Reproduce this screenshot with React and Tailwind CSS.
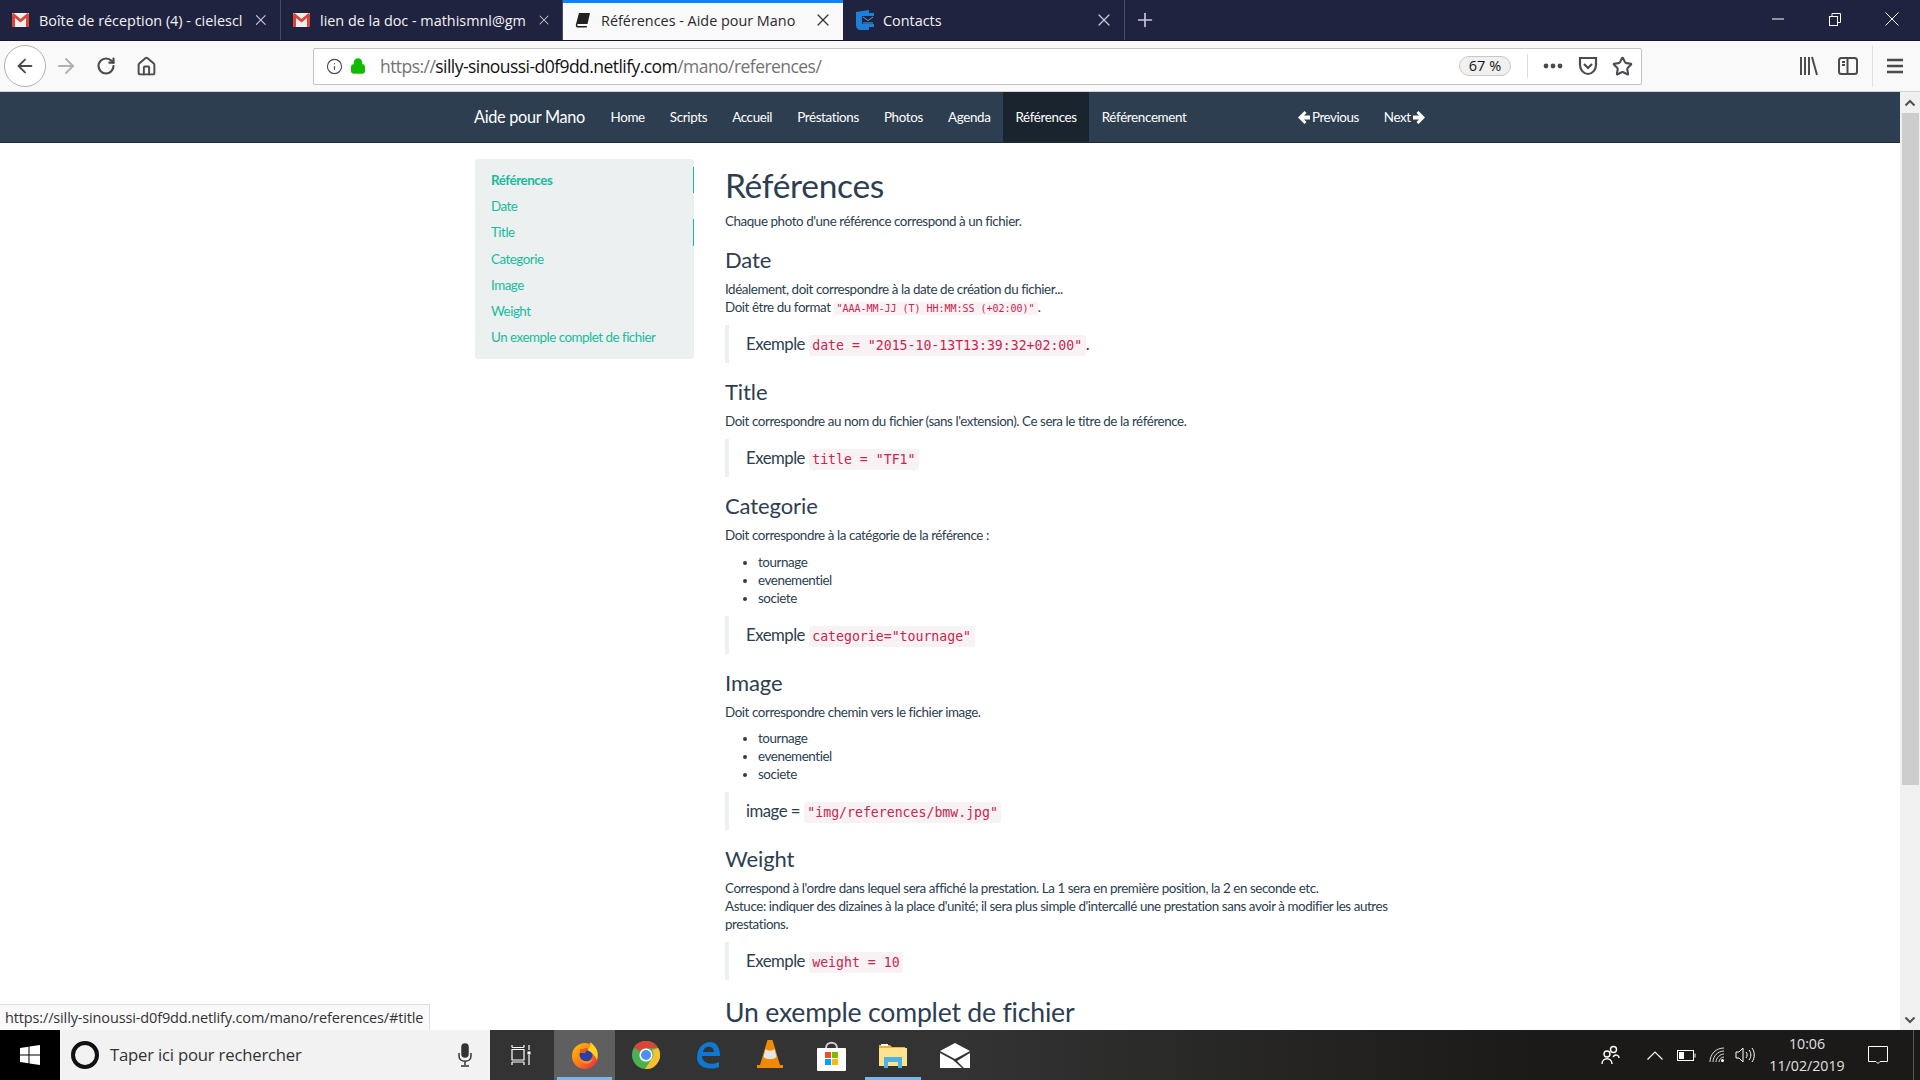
import React from 'react';
import { X, Plus, ArrowLeft, ArrowRight, RotateCw, Home as HomeIcon, Info, Lock, Star } from 'lucide-react';

const GmailIcon = () => (
  <svg width="17" height="14" viewBox="0 0 17 14" className="shrink-0">
    <rect width="17" height="14" rx="1" fill="#eeeeee" />
    <path d="M0 1.5 L0 14 L3 14 L3 5 L8.5 9.5 L14 5 L14 14 L17 14 L17 1.5 L15.5 0 L8.5 6 L1.5 0 Z" fill="#d9453a" />
  </svg>
);

const BookIcon = () => (
  <svg width="16" height="16" viewBox="0 0 16 16" className="shrink-0">
    <path d="M4 1 L15 1 L12.5 12 L3 12 C2 12 2 14 3 14 L12 14 L11.7 15.5 L2.5 15.5 C0.8 15.5 0.6 13.5 1 12 Z" fill="#222222" />
  </svg>
);

const ContactsIcon = () => (
  <svg width="20" height="20" viewBox="0 0 20 20" className="-mr-[2px] shrink-0">
    <path d="M1 2 L14 0 L14 3 L19 3 L19 17 L14 17 L14 20 L6 20 C3 20 1 18 1 15 Z" fill="#1e7fd6" />
    <rect x="7" y="6" width="12" height="8" fill="#20233f" />
    <path d="M8 7 L13 10.5 L18 7 M8 13 L18 13" stroke="#4aa3ea" strokeWidth="1" fill="none" />
  </svg>
);

const Tab = ({ icon, title, active, width }) => (
  <div className={`relative flex h-full items-center gap-[10px] pl-[12px] pr-[12px] ${width} ${active ? 'bg-[#f9f9fa] text-[#2a2a2e]' : 'border-r border-[#4a4c66] text-[#f2f2f5]'}`}>
    {active && <div className="absolute left-0 right-0 top-0 h-[3px] bg-[#0a84ff]" />}
    {icon}
    <span className="flex-1 whitespace-nowrap pt-[2px] text-[14.4px] leading-none">{title}</span>
    <X size={20} strokeWidth={1.5} className={`-mr-[2px] ${active ? 'text-[#333]' : 'text-[#c9cad3]'}`} />
  </div>
);

const TabBar = () => (
  <div className="flex h-[41px] items-stretch border-b border-[#15162b] bg-[#202340]" >
    <Tab width="w-[281px]" icon={<GmailIcon />} title="Boîte de réception (4) - cielescl" />
    <Tab width="w-[282px]" icon={<GmailIcon />} title="lien de la doc - mathismnl@gm" />
    <Tab width="w-[280px]" active icon={<BookIcon />} title="Références - Aide pour Mano" />
    <Tab width="w-[282px]" icon={<ContactsIcon />} title="Contacts" />
    <div className="flex w-[40px] items-center justify-center text-[#c9cad3]">
      <Plus size={22} strokeWidth={1.8} />
    </div>
    <div className="ml-auto flex items-center pb-[2px]">
      <div className="flex w-[57px] justify-center">
        <svg width="12" height="2" viewBox="0 0 12 2" stroke="white" strokeWidth="1"><path d="M0 1 H12" /></svg>
      </div>
      <div className="flex w-[57px] justify-center">
        <svg width="12" height="13" viewBox="0 0 12 13" fill="none" stroke="white" strokeWidth="1">
          <rect x="0.5" y="3.5" width="8" height="9" />
          <path d="M3 3 V0.5 H11.5 V9.5 H9" />
        </svg>
      </div>
      <div className="flex w-[57px] justify-center">
        <svg width="14" height="14" viewBox="0 0 14 14" stroke="white" strokeWidth="1"><path d="M0.5 0.5 L13.5 13.5 M13.5 0.5 L0.5 13.5" /></svg>
      </div>
    </div>
  </div>
);

const Toolbar = () => (
  <div className="flex h-[51px] items-center border-b border-[#d4d4d5] bg-[#f9f9fa] text-[#4a4a4f]">
    <div className="ml-[4px] flex h-[42px] w-[42px] items-center justify-center rounded-full border border-[#b1b1b3] bg-white">
      <ArrowLeft size={22} strokeWidth={2} />
    </div>
    <ArrowRight size={24} strokeWidth={2} className="ml-[8px] text-[#b1b1b3]" />
    <RotateCw size={20} strokeWidth={2.6} className="ml-[18px]" />
    <HomeIcon size={21} strokeWidth={2.2} className="ml-[20px]" />
    <div className="ml-[156px] flex h-[37px] w-[1329px] items-center rounded-[2px] border border-[#c4c4c4] bg-white pl-[12px] pr-[8px]" >
      <Info size={17} strokeWidth={1.6} />
      <Lock size={16} strokeWidth={3} className="ml-[7px] text-[#12bc00]" fill="#12bc00" />
      <span className="ml-[14px] flex-1 whitespace-nowrap text-[17.5px] tracking-[-0.55px] text-[#737373]">
        https://<span className="text-[#111]">silly-sinoussi-d0f9dd.netlify.com</span>/mano/references/
      </span>
      <div className="flex h-[20px] w-[52px] items-center justify-center rounded-full border border-[#c8c8c8] bg-[#f0f0f1] text-[14.5px] text-[#111]">67 %</div>
      <div className="ml-[16px] h-[24px] w-px bg-[#dcdcdd]" />
      <svg width="20" height="6" viewBox="0 0 20 6" className="ml-[15px]" fill="#4a4a4f">
        <circle cx="3" cy="3" r="2.4" /><circle cx="10" cy="3" r="2.4" /><circle cx="17" cy="3" r="2.4" />
      </svg>
      <svg width="20" height="20" viewBox="0 0 20 20" className="ml-[15px]" fill="none" stroke="#4a4a4f" strokeWidth="2.2">
        <path d="M2 2 H18 V9 C18 14 14 18 10 18 C6 18 2 14 2 9 Z" />
        <path d="M6 8 L10 12 L14 8" />
      </svg>
      <Star size={21} strokeWidth={2.4} className="ml-[14px]" />
    </div>
    <svg width="20" height="20" viewBox="0 0 20 20" className="ml-[157px]" fill="none" stroke="#4a4a4f" strokeWidth="2">
      <path d="M2 1 V19 M6 1 V19 M10 1 V19 M13 1 L18 19" />
    </svg>
    <svg width="20" height="20" viewBox="0 0 20 20" className="ml-[19px]" fill="none" stroke="#4a4a4f" strokeWidth="2">
      <rect x="1" y="2" width="18" height="16" rx="2.5" />
      <path d="M9.5 2 V18 M4 6 H7 M4 9 H7" />
    </svg>
    <div className="ml-[14px] h-[42px] w-px bg-[#e1e1e2]" />
    <svg width="18" height="16" viewBox="0 0 18 16" className="ml-[13px]" stroke="#4a4a4f" strokeWidth="2.4">
      <path d="M1 2 H17 M1 8 H17 M1 14 H17" />
    </svg>
  </div>
);

// glyphicon style solid arrow, pointing right unless flipped
const SolidArrow = ({ flip }) => (
  <svg width="13" height="13" viewBox="0 0 13 13" fill="white" className={flip ? '-scale-x-100' : ''}>
    <path d="M0 4.5 H6 L3.5 2 L5.5 0 L12 6.5 L5.5 13 L3.5 11 L6 8.5 H0 Z" />
  </svg>
);

const NAV_LINKS = ['Home', 'Scripts', 'Accueil', 'Préstations', 'Photos', 'Agenda', 'Références', 'Référencement'];

const NavBar = () => (
  <nav className="flex h-[51px] shrink-0 items-stretch border-b border-[#1f2c39] bg-[#2c3e50] pl-[474px] pr-[462px] text-[13.4px] tracking-[-0.35px] text-white">
    <div className="mr-[13px] flex items-center text-[16.3px] tracking-[-0.3px]">Aide pour Mano</div>
    {NAV_LINKS.map(link => (
      <div key={link} className={`flex items-center px-[12.5px] ${link === 'Références' ? 'bg-[#1a242f]' : ''}`}>{link}</div>
    ))}
    <div className="ml-auto flex items-center gap-[2px] px-[12.5px] tracking-[-0.45px]">
      <SolidArrow flip />Previous
    </div>
    <div className="flex items-center gap-[2px] px-[12.5px] tracking-[-0.45px]">
      Next<SolidArrow />
    </div>
  </nav>
);

const SIDE_LINKS = ['Références', 'Date', 'Title', 'Categorie', 'Image', 'Weight', 'Un exemple complet de fichier'];

const Sidebar = () => (
  <aside className="mt-[16px] h-[200px] w-[219px] shrink-0 rounded-[3px] bg-[#ecf0f1] py-[8px] text-[13.4px] tracking-[-0.5px] text-[#18bc9c]">
    {SIDE_LINKS.map((link, i) => (
      <div key={link} className={`flex h-[26.2px] items-center border-r pl-[16px] ${i === 0 || i === 2 ? 'border-[#18bc9c]' : 'border-transparent'} ${i === 0 ? 'font-bold tracking-[-0.45px]' : ''}`}>
        {link}
      </div>
    ))}
  </aside>
);

const Code = ({ children, small }) => (
  <code className={`whitespace-pre rounded-[3px] bg-[#f9f2f4] leading-none text-[#c7254e] font-['DejaVu_Sans_Mono',monospace] ${small ? 'px-[3px] py-px text-[10px] tracking-[-0.02px]' : 'px-[3.5px] py-[3px] text-[13.2px] tracking-normal'}`}>
    {children}
  </code>
);

const Quote = ({ children }) => (
  <blockquote className="mb-[9px] flex h-[38px] items-center whitespace-pre border-l-[4px] border-[#ecf0f1] pl-[17px] text-[16.75px] tracking-[-0.5px]">
    <span>{children}</span>
  </blockquote>
);

const H2 = ({ children }) => <h2 className="mb-[8px] mt-[17px] text-[22px] leading-[24px] tracking-[-0.1px]">{children}</h2>;

const P = ({ children }) => <p className="mb-[9px]">{children}</p>;

const Bullets = ({ tight }) => (
  <ul className={`mb-[9px] list-disc pl-[33px] ${tight ? '-mt-px' : ''}`}>
    <li>tournage</li>
    <li>evenementiel</li>
    <li>societe</li>
  </ul>
);

const Article = () => (
  <main className="ml-[31px] w-[675px] shrink-0 pt-[24px] text-[13.4px] leading-[18px] tracking-[-0.43px] text-[#2c3e50]">
    <h1 className="mb-[9px] text-[33.5px] leading-[36px] tracking-[-0.3px]">Références</h1>
    <P>Chaque photo d'une référence correspond à un fichier.</P>
    <h2 className="mb-[8px] mt-[18px] text-[22px] leading-[24px] tracking-[-0.1px]">Date</h2>
    <P>
      Idéalement, doit correspondre à la date de création du fichier...<br />
      Doit être du format <Code small>"AAA-MM-JJ (T) HH:MM:SS (+02:00)"</Code>.
    </P>
    <Quote>Exemple <Code>date = "2015-10-13T13:39:32+02:00"</Code>.</Quote>
    <H2>Title</H2>
    <P>Doit correspondre au nom du fichier (sans l'extension). Ce sera le titre de la référence.</P>
    <Quote>Exemple <Code>title = "TF1"</Code></Quote>
    <H2>Categorie</H2>
    <P>Doit correspondre à la catégorie de la référence :</P>
    <Bullets />
    <Quote>Exemple <Code>categorie="tournage"</Code></Quote>
    <H2>Image</H2>
    <P>Doit correspondre chemin vers le fichier image.</P>
    <Bullets tight />
    <Quote>image = <Code>"img/references/bmw.jpg"</Code></Quote>
    <H2>Weight</H2>
    <P>
      Correspond à l'ordre dans lequel sera affiché la prestation. La 1 sera en première position, la 2 en seconde etc.<br />
      Astuce: indiquer des dizaines à la place d'unité; il sera plus simple d'intercallé une prestation sans avoir à modifier les autres prestations.
    </P>
    <Quote>Exemple <Code>weight = 10</Code></Quote>
    <h1 className="mt-[16px] text-[26.6px] leading-[32px] tracking-[-0.2px]">Un exemple complet de fichier</h1>
  </main>
);

const Scrollbar = () => (
  <div className="flex w-[20px] shrink-0 flex-col items-center bg-[#f0f0f0] text-[#505050]">
    <svg width="12" height="8" viewBox="0 0 12 8" className="mt-[7px]" fill="none" stroke="currentColor" strokeWidth="2"><path d="M1.5 6.5 L6 2 L10.5 6.5" /></svg>
    <div className="mt-[6px] h-[672px] w-[17px] bg-[#cdcdcd]" />
    <svg width="12" height="8" viewBox="0 0 12 8" className="mb-[6px] mt-auto" fill="none" stroke="currentColor" strokeWidth="2"><path d="M1.5 1.5 L6 6 L10.5 1.5" /></svg>
  </div>
);

const FirefoxIcon = () => (
  <svg width="28" height="28" viewBox="0 0 28 28">
    <defs>
      <linearGradient id="fx" x1="0" y1="0" x2="1" y2="1"><stop offset="0" stopColor="#ffcb00" /><stop offset="0.5" stopColor="#ff7a1a" /><stop offset="1" stopColor="#e3204d" /></linearGradient>
    </defs>
    <circle cx="14" cy="15" r="13" fill="url(#fx)" />
    <circle cx="15" cy="14" r="6.5" fill="#2b3fa8" />
    <path d="M19 1 C26 6 28 12 26 19 C24 15 21 11 16 9 C19 7 20 4 19 1 Z" fill="#ffd21f" />
    <path d="M7 15 C10 21 17 22 22 18 C20 24 11 25 7 15 Z" fill="#ff9a15" />
    <path d="M9 8 H17 L14 12 H9 Z" fill="#f25a1d" />
  </svg>
);

const ChromeIcon = () => (
  <svg width="28" height="28" viewBox="0 0 28 28">
    <circle cx="14" cy="14" r="14" fill="#4caf50" />
    <path d="M14 0 A14 14 0 0 1 26.1 7 L14 7 A7 7 0 0 0 7.9 10.5 L2 6 A14 14 0 0 1 14 0 Z" fill="#db4437" />
    <path d="M26.1 7 A14 14 0 0 1 13 28 L20 17.5 A7 7 0 0 0 20 9 Z" fill="#fbc02d" />
    <circle cx="14" cy="14" r="6.6" fill="#fff" />
    <circle cx="14" cy="14" r="5" fill="#4f8ef0" />
  </svg>
);

const EdgeIcon = () => (
  <svg width="26" height="28" viewBox="0 0 26 28" fill="none">
    <path d="M2 17 C2 6 9 1 15 1 C22 1 25 7 25 15 H7 C7 22 16 25 24 21 V26 C14 30 2 26 2 17 Z M8 11 H19 C19 4 9 4 8 11 Z" fill="#0f78d4" fillRule="evenodd" />
  </svg>
);

const VlcIcon = () => (
  <svg width="26" height="30" viewBox="0 0 26 30">
    <path d="M10.5 0 H15.5 L23 25 H26 V28 H0 V25 H3 Z" fill="#f08a00" />
    <path d="M8.5 9 C11 11 15 11 17.5 9 L19.5 17 C16 20 10 20 6.5 17 Z" fill="#e6e6e6" />
  </svg>
);

const StoreIcon = () => (
  <svg width="29" height="31" viewBox="0 0 29 31">
    <path d="M9 8 C9 1 20 1 20 8" fill="none" stroke="#d0d0d0" strokeWidth="2" />
    <rect y="8" width="29" height="23" rx="1" fill="#fff" />
    <rect x="8" y="12" width="6" height="6" fill="#f25022" />
    <rect x="15" y="12" width="6" height="6" fill="#7fba00" />
    <rect x="8" y="19" width="6" height="6" fill="#00a4ef" />
    <rect x="15" y="19" width="6" height="6" fill="#ffb900" />
  </svg>
);

const ExplorerIcon = () => (
  <svg width="28" height="25" viewBox="0 0 28 25">
    <path d="M0 2 H11 L13 4 H26 V6 H0 Z" fill="#e6b33c" />
    <rect y="5" width="28" height="18" fill="#fde38c" />
    <rect x="2" y="1" width="7" height="2" fill="#fff" />
    <path d="M5 25 V14 H23 V25 H19 V19 H9 V25 Z" fill="#4db4e6" />
  </svg>
);

const MailIcon = () => (
  <svg width="30" height="25" viewBox="0 0 30 25">
    <path d="M0 8 L15 0 L30 8 L15 16 Z M0 10 L13 17 L22 25 H0 Z M30 10 V25 H24 L17 18 Z" fill="#fff" />
  </svg>
);

const TaskIcon = ({ children, active, open, width = 'w-[51px]' }) => (
  <div className={`relative flex h-full items-center justify-center ${width} ${active ? 'bg-[#5f5f5f]' : ''}`}>
    {children}
    {open && <div className="absolute bottom-0 left-[5%] right-[5%] h-[3px] bg-[#76b9ed]" />}
  </div>
);

const Taskbar = () => (
  <div className="flex h-[50px] shrink-0 items-stretch bg-gradient-to-r from-[#333333] from-50% to-[#1b1a18] to-80% text-white">
    <div className="flex w-[60px] items-center justify-center bg-black">
      <svg width="20" height="20" viewBox="0 0 20 20" fill="#fff">
        <path d="M0 3 L8.5 1.8 V9.5 H0 Z M9.5 1.6 L20 0 V9.5 H9.5 Z M0 10.5 H8.5 V18.2 L0 17 Z M9.5 10.5 H20 V20 L9.5 18.4 Z" />
      </svg>
    </div>
    <div className="flex w-[430px] items-center bg-[#f2f2f2] pl-[11px] text-[#333]">
      <div className="h-[28px] w-[28px] rounded-full border-[4px] border-[#111]" />
      <span className="ml-[11px] flex-1 text-[16.7px] tracking-[-0.2px]">Taper ici pour rechercher</span>
      <svg width="16" height="24" viewBox="0 0 16 24" className="mr-[17px]" fill="none" stroke="#333" strokeWidth="1.5">
        <rect x="5" y="1" width="6" height="13" rx="3" fill="#333" />
        <path d="M2 10 V13 C2 20 14 20 14 13 V10 M8 18 V22 M4 23 H12" />
      </svg>
    </div>
    <div className="flex w-[64px] items-center justify-center pr-[2px]">
      <svg width="20" height="22" viewBox="0 0 20 22" fill="none" stroke="#fff" strokeWidth="1.2">
        <path d="M1 3.5 V1 M13 3.5 V1 M1 3.5 H13 M1 5.5 H13 V16 H1 Z M1 18 H13 M1 18 V21 M13 18 V21 M18 1 V6 M18 11 V21" />
        <rect x="16.5" y="7.5" width="3" height="3" fill="#fff" stroke="none" />
      </svg>
    </div>
    <TaskIcon active open width="w-[61px]"><FirefoxIcon /></TaskIcon>
    <TaskIcon width="w-[62px]"><ChromeIcon /></TaskIcon>
    <TaskIcon width="w-[62px]"><EdgeIcon /></TaskIcon>
    <TaskIcon width="w-[61px]"><VlcIcon /></TaskIcon>
    <TaskIcon width="w-[62px]"><StoreIcon /></TaskIcon>
    <TaskIcon open width="w-[62px]"><ExplorerIcon /></TaskIcon>
    <TaskIcon width="w-[62px]"><MailIcon /></TaskIcon>
    <div className="ml-auto flex items-center pr-[6px] text-[#e8e8e8]">
      <svg width="19" height="20" viewBox="0 0 19 20" fill="none" stroke="#fff" strokeWidth="1.4">
        <circle cx="12.5" cy="4.5" r="3" /><circle cx="6" cy="9" r="3" />
        <path d="M1 19 C1 12 11 12 11 19 M12 12 C14 8.5 18 10 18 13" />
      </svg>
      <svg width="16" height="9" viewBox="0 0 16 9" className="ml-[27px]" fill="none" stroke="#fff" strokeWidth="1.2"><path d="M0.5 8.5 L8 1 L15.5 8.5" /></svg>
      <svg width="19" height="11" viewBox="0 0 19 11" className="ml-[14px]" fill="none" stroke="#fff" strokeWidth="1">
        <rect x="0.5" y="0.5" width="16" height="10" /><rect x="2" y="2" width="5" height="7" fill="#fff" stroke="none" /><rect x="17.5" y="3.5" width="1" height="4" fill="#fff" stroke="none" />
      </svg>
      <svg width="16" height="16" viewBox="0 0 16 16" className="ml-[13px]" fill="none" stroke="#ddd" strokeWidth="1">
        <path d="M1 15 C1 7 7 1 15 1 M4 15 C4 9 9 4 15 4 M7 15 C7 11 11 7 15 7 M10 15 C10 12.5 12.5 10 15 10" />
        <circle cx="13.5" cy="13.5" r="1.5" fill="#fff" stroke="none" />
      </svg>
      <svg width="20" height="16" viewBox="0 0 20 16" className="ml-[10px]" fill="none" stroke="#fff" strokeWidth="1">
        <path d="M1 5 H4 L8 1 V15 L4 11 H1 Z M11 5 C12.5 7 12.5 9 11 11 M14 3 C16.5 6 16.5 10 14 13 M17 1 C20 5 20 11 17 15" />
      </svg>
      <div className="ml-[10px] w-[84px] text-center text-[14.2px] leading-[22px] text-[#e0e0e0]">10:06<br />11/02/2019</div>
      <svg width="20" height="18" viewBox="0 0 20 18" className="ml-[19px]" fill="none" stroke="#fff" strokeWidth="1"><path d="M0.5 0.5 H19.5 V15.5 H12 L10 17.5 L8 15.5 H0.5 Z" /></svg>
      <div className="ml-[25px] h-full w-px bg-[#555]" />
    </div>
  </div>
);

export default function App() {
  return (
    <div className="flex h-screen w-[1920px] flex-col overflow-hidden bg-white font-['Lato',sans-serif]">
      <div className="shrink-0 font-['Open_Sans',sans-serif]">
        <TabBar />
        <Toolbar />
      </div>
      <div className="flex min-h-0 flex-1">
        <div className="relative flex min-w-0 flex-1 flex-col overflow-hidden">
          <NavBar />
          <div className="flex min-h-0 flex-1 pl-[475px]">
            <Sidebar />
            <Article />
          </div>
          {/* link preview shown by the browser */}
          <div className="absolute bottom-0 left-0 flex h-[26px] items-center border-r border-t border-[#dcdcdc] bg-[#f9f9fa] pl-[5px] pr-[6px] font-['Open_Sans',sans-serif] text-[14.5px] tracking-[-0.14px] text-[#333]">
            https://silly-sinoussi-d0f9dd.netlify.com/mano/references/#title
          </div>
        </div>
        <Scrollbar />
      </div>
      <div className="shrink-0 font-['Open_Sans',sans-serif]">
        <Taskbar />
      </div>
    </div>
  );
}
